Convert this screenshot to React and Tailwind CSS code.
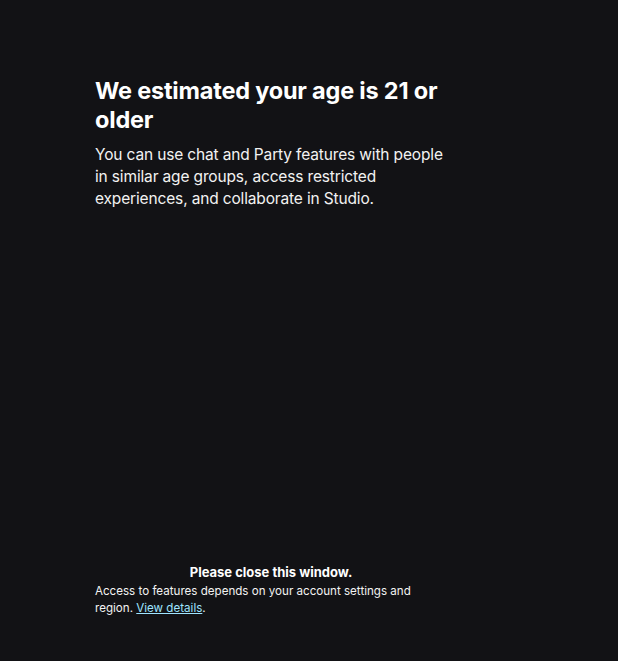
import React from 'react';

export default function App() {
  return (
    <div className="min-h-[661px] w-full bg-[#121215] text-white flex flex-col" style={{ fontFamily: 'Inter, "Noto Sans", sans-serif' }}>
      <div className="ml-[95px] w-[352px] flex flex-col flex-1 pt-[76px] pb-[44px]">
        <h1 className="text-[23.5px] leading-[29px] font-bold tracking-[-0.2px]">We estimated your age is 21 or older</h1>
        <p className="mt-[10px] text-[15.5px] leading-[22px] tracking-[-0.15px] text-[#f2f2f2]">
          You can use chat and Party features with people in similar age groups, access restricted experiences, and collaborate in Studio.
        </p>

        <div className="mt-auto">
          <p className="text-center text-[13px] leading-[17px] font-bold">Please close this window.</p>
          <p className="mt-[2px] text-[11.6px] leading-[17px] text-[#f2f2f2]">
            Access to features depends on your account settings and region.{' '}
            <a href="#" className="text-[#9ee4ff] underline">View details</a>.
          </p>
        </div>
      </div>
    </div>
  );
}
